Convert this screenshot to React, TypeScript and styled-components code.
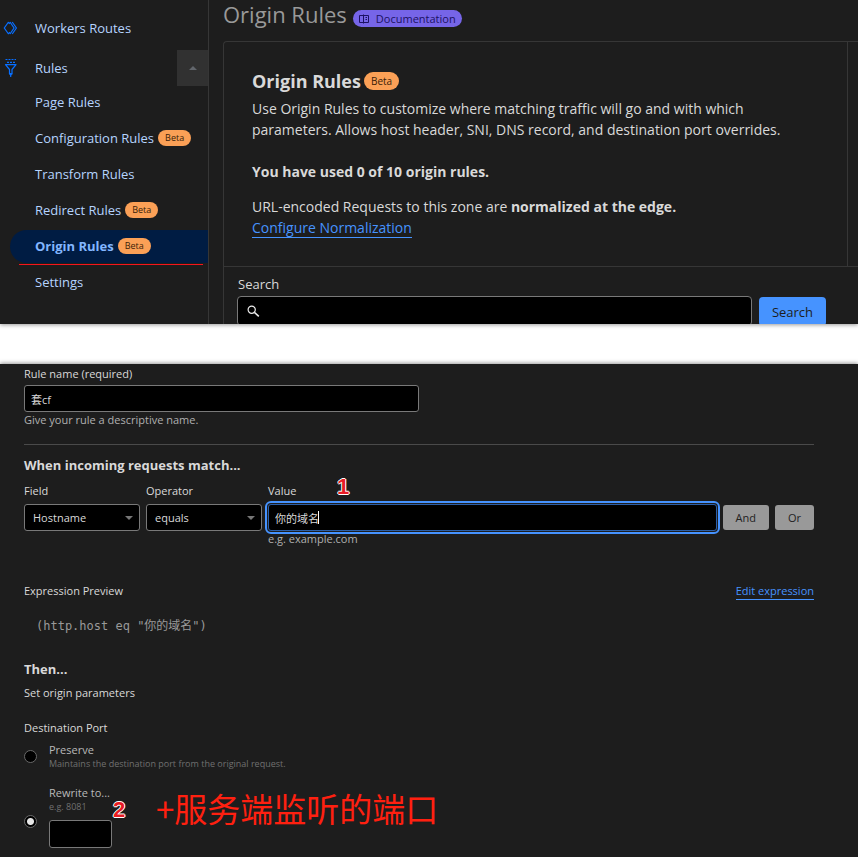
import React from 'react';
import styled, { createGlobalStyle } from 'styled-components';

const Global = createGlobalStyle`
  * { box-sizing: border-box; }
  body {
    margin: 0;
    background: #fff;
    color: #d9d9d9;
    font-family: "Open Sans", "Noto Sans CJK SC", sans-serif;
    font-size: 11px;
    line-height: 16px;
  }
  button, input, select { font: inherit; color: inherit; }
  h1, h2, h3, p { margin: 0; }
`;

const Page = styled.main`
  display: flex;
  flex-direction: column;
  gap: 40px;
`;

const Dashboard = styled.section`
  display: flex;
  background: #1d1d1d;
  box-shadow: 0 1px 4px rgba(0, 0, 0, 0.4);
  overflow-x: clip;
`;

const Sidebar = styled.nav`
  position: relative;
  flex: 0 0 209px;
  padding-top: 10px;
  border-right: 1px solid #363636;
`;

const NavGroup = styled.div`
  display: flex;
  align-items: center;
  height: 36px;
  margin-bottom: 4px;
  padding-left: 3px;
  &:nth-of-type(2) { margin-bottom: 0; }
`;

const NavLink = styled.a`
  flex: 1;
  margin-left: 16px;
  color: #b6d4ff;
  font-size: 13px;
  text-decoration: none;
`;

const Expander = styled.button`
  display: grid;
  place-items: center;
  width: 31px;
  height: 36px;
  border: 0;
  padding: 0;
  background: #313131;
`;

const SubList = styled.ul`
  display: flex;
  flex-direction: column;
  gap: 3px;
  margin: 0;
  padding: 0 0 0 10px;
  list-style: none;
`;

const SubLink = styled.a<{ $active?: boolean }>`
  display: flex;
  align-items: center;
  gap: 4px;
  height: 33px;
  padding: 0 0 2px 25px;
  border-radius: 17px 0 0 17px;
  font-size: 13px;
  text-decoration: none;
  color: ${(p) => (p.$active ? '#82b6ff' : '#b6d4ff')};
  font-weight: ${(p) => (p.$active ? 700 : 400)};
  background: ${(p) => (p.$active ? '#001c43' : 'transparent')};
`;

const Badge = styled.span<{ $large?: boolean }>`
  display: inline-flex;
  align-items: center;
  height: ${(p) => (p.$large ? 18 : 16)}px;
  padding: 0 7px;
  border-radius: 9px;
  background: #fba056;
  color: #3a2108;
  font-size: ${(p) => (p.$large ? 10 : 9)}px;
  font-weight: 400;
`;

const RedLine = styled.span`
  position: absolute;
  left: 19px;
  right: 5px;
  top: 264px;
  height: 1px;
  background: #f5141c;
`;

const Content = styled.div`
  flex: 1;
  min-width: 0;
  padding-left: 14px;
`;

const TitleBar = styled.header`
  display: flex;
  align-items: flex-start;
  gap: 6px;
  height: 41px;
`;

const Title = styled.h1`
  color: #999;
  font-size: 22px;
  line-height: 28px;
  font-weight: 400;
`;

const DocLink = styled.a`
  display: flex;
  align-items: center;
  gap: 7px;
  height: 17px;
  margin-top: 10px;
  padding: 0 6px;
  border-radius: 9px;
  background: #7665e8;
  color: #1c1264;
  font-size: 11px;
  text-decoration: none;
`;

const Card = styled.div`
  border: 1px solid #363636;
  border-width: 1px 0 0 1px;
  border-radius: 4px 0 0 0;
`;

const IntroFrame = styled.div`
  padding-right: 10px;
  border-bottom: 1px solid #363636;
`;

const Intro = styled.div`
  padding: 28px;
  border-right: 1px solid #363636;
  font-size: 14px;
  line-height: 21px;
`;

const IntroTitle = styled.h2`
  display: flex;
  align-items: center;
  gap: 3px;
  height: 22px;
  margin-bottom: 6px;
  font-size: 18px;
`;

const Paragraph = styled.p`
  margin-bottom: 14px;
  &:nth-of-type(1) { max-width: 560px; margin-bottom: 21px; }
  &:last-child { margin-bottom: 0; }
`;

const TextLink = styled.a`
  color: #4693ff;
  text-decoration: none;
  border-bottom: 1px solid #4693ff;
`;

const SearchArea = styled.form`
  padding: 8px 32px 0 13px;
`;

const SearchLabel = styled.label`
  display: block;
  height: 21px;
  padding-left: 1px;
  font-size: 13px;
  line-height: 18px;
`;

const SearchRow = styled.div`
  display: flex;
  gap: 7px;
  height: 28px;
  overflow: hidden;
`;

const SearchBox = styled.div`
  display: flex;
  align-items: center;
  gap: 6px;
  flex: 1;
  height: 30px;
  padding: 0 9px;
  border: 1px solid #797979;
  border-radius: 4px;
  background: #000;
  input { flex: 1; min-width: 0; border: 0; outline: 0; background: transparent; }
`;

const SearchButton = styled.button`
  width: 67px;
  height: 29px;
  margin-top: 1px;
  border: 0;
  border-radius: 4px;
  background: #4693ff;
  color: #1d1d1d;
  font-size: 13px;
`;

const Editor = styled.form`
  display: flex;
  flex-direction: column;
  min-height: 493px;
  padding: 2px 44px 9px 24px;
  background: #1d1d1d;
  box-shadow: 0 -1px 4px rgba(0, 0, 0, 0.4);
`;

const Field = styled.div<{ $width?: string }>`
  position: relative;
  display: flex;
  flex-direction: column;
  gap: 5px;
  flex: ${(p) => (p.$width ? `0 0 ${p.$width}` : '1')};
  min-width: 0;
`;

const FieldLabel = styled.label`
  font-size: 11px;
`;

const TextBox = styled.input<{ $focused?: boolean }>`
  width: 100%;
  height: 27px;
  padding: 0 6px;
  border: 1px solid ${(p) => (p.$focused ? '#2c5fa8' : '#797979')};
  border-radius: 3px;
  outline: ${(p) => (p.$focused ? '2px solid #4693ff' : '0')};
  outline-offset: 1px;
  background: #000;
`;

const NameField = styled(Field)`
  flex: none;
  gap: 0;
  width: 50%;
  ${TextBox} { margin-top: 3px; }
`;

const Help = styled.span`
  color: #b0b0b0;
`;

const Divider = styled.hr`
  width: 100%;
  margin: 16px 0 11px;
  border: 0;
  border-top: 1px solid #4a4a4a;
`;

const Heading = styled.h3`
  font-size: 13px;
  line-height: 18px;
`;

const MatchRow = styled.div`
  display: flex;
  align-items: flex-start;
  gap: 6px;
  margin-top: 9px;
`;

const SelectWrap = styled.div`
  position: relative;
  select {
    width: 100%;
    height: 27px;
    padding: 0 8px;
    appearance: none;
    border: 1px solid #797979;
    border-radius: 3px;
    background: #000;
  }
  svg { position: absolute; right: 7px; top: 12px; pointer-events: none; }
`;

const ValueHelp = styled(Help)`
  margin-top: -5px;
`;

const Caret = styled.span`
  position: absolute;
  left: 50px;
  top: 28px;
  width: 1px;
  height: 13px;
  background: #fff;
`;

const LogicButton = styled.button`
  height: 25px;
  margin-top: 22px;
  padding: 0 13px;
  border: 0;
  border-radius: 3px;
  background: #999;
  color: #222;
`;

const PreviewHead = styled.div`
  display: flex;
  justify-content: space-between;
  margin-top: 36px;
`;

const Code = styled.code`
  display: block;
  margin: 18px 12px 26px;
  color: #999;
  font-family: "DejaVu Sans Mono", "Noto Sans CJK SC", monospace;
  font-size: 12px;
  line-height: 16px;
`;

const Params = styled.p`
  margin: 7px 0 19px;
`;

const Options = styled.fieldset`
  display: flex;
  flex-direction: column;
  margin: 0;
  padding: 0;
  border: 0;
  legend { padding: 0; margin-bottom: 6px; }
`;

const Option = styled.div`
  display: flex;
  align-items: center;
  gap: 12px;
  color: #b9b9b9;
`;

const OptionText = styled.div`
  position: relative;
  display: flex;
  flex-direction: column;
  small { color: #707070; font-size: 9px; line-height: 12px; }
`;

const Radio = styled.input`
  width: 13px;
  height: 13px;
  margin: 0;
  appearance: none;
  border: 1px solid #696969;
  border-radius: 50%;
  background: #000;
  &:checked { background: radial-gradient(circle, #e6e6e6 3px, #000 4px); }
`;

const RewriteOption = styled(Option)`
  align-items: flex-end;
  margin-top: 15px;
  ${Radio} { margin-bottom: 20px; }
`;

const PortInput = styled(TextBox)`
  width: 63px;
  height: 28px;
  margin-top: 7px;
`;

const Marker = styled.span<{ $x: number; $y: number }>`
  position: absolute;
  left: ${(p) => p.$x}px;
  top: ${(p) => p.$y}px;
  color: #e81c24;
  font-family: "Liberation Sans", sans-serif;
  font-size: 22px;
  font-weight: 700;
  line-height: 22px;
  text-shadow: 1px 0 #fff, -1px 0 #fff, 0 1px #fff, 0 -1px #fff;
`;

const Note = styled.span`
  position: absolute;
  left: 107px;
  top: -1px;
  color: #ff2010;
  font-family: "Noto Sans CJK SC", sans-serif;
  font-size: 33px;
  font-weight: 400;
  line-height: 48px;
  white-space: nowrap;
`;

const Triangle = ({ up }: { up?: boolean }) => (
  <svg width="8" height="4" viewBox="0 0 8 4" aria-hidden="true">
    <path d={up ? 'M0 4 4 0l4 4z' : 'M0 0h8L4 4z'} fill={up ? '#62666c' : '#777'} />
  </svg>
);

const WorkersIcon = () => (
  <svg width="16" height="16" viewBox="0 0 16 16" fill="none" stroke="#086fff" strokeWidth="1.2" aria-hidden="true">
    <path d="M5.5 2 1.3 8l4.2 6M5.5 2l1.2 1.8M5.5 14l1.2-1.8M7 2l4 6-4 6M9.2 2l4.2 6-4.2 6" />
  </svg>
);

const FunnelIcon = () => (
  <svg width="16" height="20" viewBox="0 0 16 20" fill="none" stroke="#086fff" strokeWidth="1.2" aria-hidden="true">
    <path d="M2.5 1.5h10.5M4 4.3h8" strokeDasharray="2 1" />
    <path d="M2.5 6.6h10.5L9 11.5v4.5H6.5v-4.5zM7.7 15v4" strokeLinejoin="round" />
    <path d="M6 15.5h3.5L7.7 18z" fill="#086fff" stroke="none" />
  </svg>
);

const BookIcon = () => (
  <svg width="10" height="10" viewBox="0 0 10 10" fill="none" stroke="#1c1264" aria-hidden="true">
    <path d="M.5 1.5h4v7h-4zM4.5 .5v9M4.5 1.5h5v7h-5M6.5 3.5H8M6.5 5.5H8" />
  </svg>
);

const SearchIcon = () => (
  <svg width="13" height="13" viewBox="0 0 13 13" fill="none" stroke="#eee" strokeWidth="1.2" aria-hidden="true">
    <circle cx="4.7" cy="4.7" r="3.6" />
    <path d="m7.4 7.4 4.4 4" strokeWidth="1.5" />
  </svg>
);

const subItems = [
  { name: 'Page Rules' },
  { name: 'Configuration Rules', beta: true },
  { name: 'Transform Rules' },
  { name: 'Redirect Rules', beta: true },
  { name: 'Origin Rules', beta: true, active: true },
  { name: 'Settings' },
];

export default function App() {
  return (
    <>
      <Global />
      <Page>
        <Dashboard>
          <Sidebar>
            <NavGroup><WorkersIcon /><NavLink href="#workers">Workers Routes</NavLink></NavGroup>
            <NavGroup>
              <FunnelIcon />
              <NavLink href="#rules">Rules</NavLink>
              <Expander type="button" aria-label="Collapse Rules"><Triangle up /></Expander>
            </NavGroup>
            <SubList>
              {subItems.map((item) => (
                <li key={item.name}>
                  <SubLink href="#rules" $active={item.active}>
                    {item.name}
                    {item.beta && <Badge>Beta</Badge>}
                  </SubLink>
                </li>
              ))}
            </SubList>
            <RedLine />
          </Sidebar>
          <Content>
            <TitleBar>
              <Title>Origin Rules</Title>
              <DocLink href="#docs"><BookIcon />Documentation</DocLink>
            </TitleBar>
            <Card>
              <IntroFrame>
                <Intro>
                  <IntroTitle>Origin Rules<Badge $large>Beta</Badge></IntroTitle>
                  <Paragraph>
                    Use Origin Rules to customize where matching traffic will go and with which
                    parameters. Allows host header, SNI, DNS record, and destination port overrides.
                  </Paragraph>
                  <Paragraph><b>You have used 0 of 10 origin rules.</b></Paragraph>
                  <Paragraph>
                    URL-encoded Requests to this zone are <b>normalized at the edge.</b>
                    <br />
                    <TextLink href="#normalization">Configure Normalization</TextLink>
                  </Paragraph>
                </Intro>
              </IntroFrame>
              <SearchArea>
                <SearchLabel htmlFor="search">Search</SearchLabel>
                <SearchRow>
                  <SearchBox><SearchIcon /><input id="search" type="text" /></SearchBox>
                  <SearchButton type="button">Search</SearchButton>
                </SearchRow>
              </SearchArea>
            </Card>
          </Content>
        </Dashboard>

        <Editor>
          <NameField>
            <FieldLabel htmlFor="name">Rule name (required)</FieldLabel>
            <TextBox id="name" defaultValue="套cf" />
            <Help>Give your rule a descriptive name.</Help>
          </NameField>
          <Divider />
          <Heading>When incoming requests match...</Heading>
          <MatchRow>
            <Field $width="116px">
              <FieldLabel htmlFor="field">Field</FieldLabel>
              <SelectWrap>
                <select id="field" defaultValue="Hostname"><option>Hostname</option></select>
                <Triangle />
              </SelectWrap>
            </Field>
            <Field $width="116px">
              <FieldLabel htmlFor="operator">Operator</FieldLabel>
              <SelectWrap>
                <select id="operator" defaultValue="equals"><option>equals</option></select>
                <Triangle />
              </SelectWrap>
            </Field>
            <Field>
              <FieldLabel htmlFor="value">Value</FieldLabel>
              <TextBox id="value" $focused defaultValue="你的域名" />
              <Caret />
              <ValueHelp>e.g. example.com</ValueHelp>
              <Marker $x={69} $y={-7}>1</Marker>
            </Field>
            <LogicButton type="button">And</LogicButton>
            <LogicButton type="button">Or</LogicButton>
          </MatchRow>
          <PreviewHead>
            <span>Expression Preview</span>
            <TextLink href="#expression">Edit expression</TextLink>
          </PreviewHead>
          <Code>(http.host eq "你的域名")</Code>
          <Heading>Then...</Heading>
          <Params>Set origin parameters</Params>
          <Options>
            <legend>Destination Port</legend>
            <Option>
              <Radio type="radio" name="port" id="preserve" />
              <OptionText>
                <label htmlFor="preserve">Preserve</label>
                <small>Maintains the destination port from the original request.</small>
              </OptionText>
            </Option>
            <RewriteOption>
              <Radio type="radio" name="port" id="rewrite" defaultChecked />
              <OptionText>
                <label htmlFor="rewrite">Rewrite to...</label>
                <small>e.g. 8081</small>
                <PortInput type="text" aria-label="Destination port number" />
                <Marker $x={64} $y={14}>2</Marker>
                <Note>+服务端监听的端口</Note>
              </OptionText>
            </RewriteOption>
          </Options>
        </Editor>
      </Page>
    </>
  );
}
